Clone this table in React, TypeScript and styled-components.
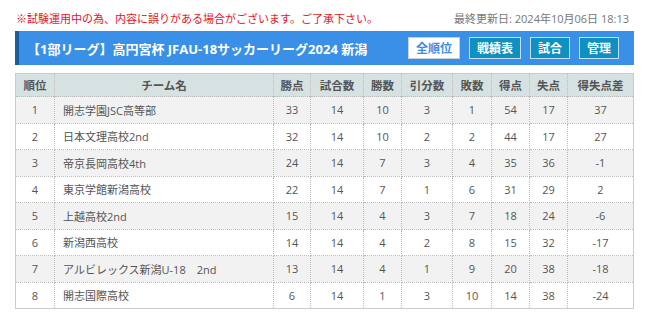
import styled, { createGlobalStyle } from 'styled-components';

const GlobalStyle = createGlobalStyle`
  body {
    margin: 0;
    background: #fff;
    font-family: "Open Sans", "Noto Sans CJK JP", sans-serif;
  }
`;

const rows = [
  { rank: 1, team: '開志学園JSC高等部', pts: 33, played: 14, win: 10, draw: 3, lose: 1, gf: 54, ga: 17, gd: 37 },
  { rank: 2, team: '日本文理高校2nd', pts: 32, played: 14, win: 10, draw: 2, lose: 2, gf: 44, ga: 17, gd: 27 },
  { rank: 3, team: '帝京長岡高校4th', pts: 24, played: 14, win: 7, draw: 3, lose: 4, gf: 35, ga: 36, gd: -1 },
  { rank: 4, team: '東京学館新潟高校', pts: 22, played: 14, win: 7, draw: 1, lose: 6, gf: 31, ga: 29, gd: 2 },
  { rank: 5, team: '上越高校2nd', pts: 15, played: 14, win: 4, draw: 3, lose: 7, gf: 18, ga: 24, gd: -6 },
  { rank: 6, team: '新潟西高校', pts: 14, played: 14, win: 4, draw: 2, lose: 8, gf: 15, ga: 32, gd: -17 },
  { rank: 7, team: 'アルビレックス新潟U-18　2nd', pts: 13, played: 14, win: 4, draw: 1, lose: 9, gf: 20, ga: 38, gd: -18 },
  { rank: 8, team: '開志国際高校', pts: 6, played: 14, win: 1, draw: 3, lose: 10, gf: 14, ga: 38, gd: -24 },
];

const columns = [
  { label: '順位', width: 39 },
  { label: 'チーム名', width: 219 },
  { label: '勝点', width: 37 },
  { label: '試合数', width: 53 },
  { label: '勝数', width: 38 },
  { label: '引分数', width: 51 },
  { label: '敗数', width: 39 },
  { label: '得点', width: 38 },
  { label: '失点', width: 38 },
  { label: '得失点差', width: 66 },
];

const tabs = ['全順位', '戦績表', '試合', '管理'];

const App = () => {
  return (
    <Page>
      <GlobalStyle />
      <NoticeRow>
        <Notice>※試験運用中の為、内容に誤りがある場合がございます。ご了承下さい。</Notice>
        <Updated>最終更新日: 2024年10月06日 18:13</Updated>
      </NoticeRow>
      <TitleBar>
        <Title>【1部リーグ】高円宮杯 JFAU-18サッカーリーグ2024 新潟</Title>
        <TabList>
          {tabs.map((t, i) => (
            <TabButton key={t} $active={i === 0}>
              {t}
            </TabButton>
          ))}
        </TabList>
      </TitleBar>
      <Table>
        <colgroup>
          {columns.map((c) => (
            <col key={c.label} style={{ width: c.width }} />
          ))}
        </colgroup>
        <thead>
          <tr>
            {columns.map((c) => (
              <Th key={c.label}>{c.label}</Th>
            ))}
          </tr>
        </thead>
        <tbody>
          {rows.map((r) => (
            <Tr key={r.rank}>
              <Td>{r.rank}</Td>
              <Td $left>{r.team}</Td>
              <Td>{r.pts}</Td>
              <Td>{r.played}</Td>
              <Td>{r.win}</Td>
              <Td>{r.draw}</Td>
              <Td>{r.lose}</Td>
              <Td>{r.gf}</Td>
              <Td>{r.ga}</Td>
              <Td>{r.gd}</Td>
            </Tr>
          ))}
        </tbody>
      </Table>
    </Page>
  );
};

export default App;

const Page = styled.div`
  width: 619px;
  padding: 10px 0 0 15px;
`;

const NoticeRow = styled.div`
  display: flex;
  justify-content: space-between;
  align-items: center;
  height: 16px;
  padding: 0 5px 0 1px;
`;

const Notice = styled.span`
  font-size: 11px;
  color: #e8141e;
`;

const Updated = styled.span`
  font-size: 11px;
  color: #777;
`;

const TitleBar = styled.div`
  display: flex;
  justify-content: space-between;
  align-items: center;
  margin-top: 5px;
  height: 34px;
  padding: 0 15px 0 8px;
  background-color: #3990e6;
  border-left: 4px solid #1b5d9c;
`;

const Title = styled.h1`
  margin: 0;
  font-size: 13px;
  font-weight: bold;
  color: #fff;
`;

const TabList = styled.nav`
  display: flex;
  gap: 9px;
`;

const TabButton = styled.button<{ $active?: boolean }>`
  height: 22px;
  padding: 0 7px;
  font-family: inherit;
  font-size: 12px;
  font-weight: bold;
  color: ${(p) => (p.$active ? '#3a8ee4' : '#fff')};
  background-color: ${(p) => (p.$active ? '#fff' : '#0e90c0')};
  border: 1px solid ${(p) => (p.$active ? '#cfcfcf' : '#bfe0ec')};
  cursor: pointer;
`;

const Table = styled.table`
  margin-top: 8px;
  width: 619px;
  border-collapse: collapse;
  table-layout: fixed;
  border: 1px solid #ccc;
  font-size: 11px;
  color: #555;
`;

const Th = styled.th`
  height: 22px;
  padding: 0;
  background-color: #d6e1e1;
  font-size: 11.5px;
  font-weight: bold;
  color: #555;
  border-left: 1px dotted #bbb;
  text-align: center;
`;

const Tr = styled.tr`
  &:nth-child(odd) {
    background-color: #f2f2f2;
  }
  &:nth-child(even) {
    background-color: #fff;
  }
`;

const Td = styled.td<{ $left?: boolean }>`
  height: 25.5px;
  padding: 0 ${(p) => (p.$left ? '8px' : '0')};
  text-align: ${(p) => (p.$left ? 'left' : 'center')};
  border: 1px dotted #bbb;
  white-space: nowrap;
`;
